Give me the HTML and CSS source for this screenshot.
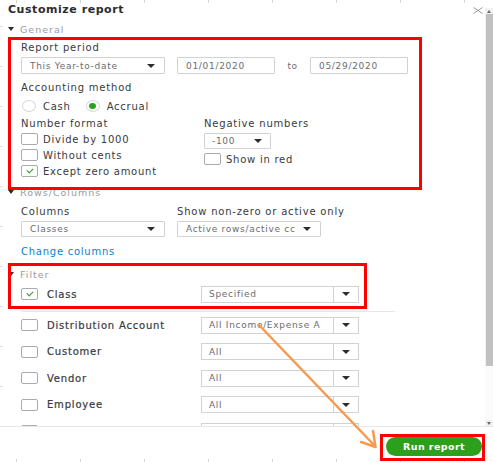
FILE: index.html
```html
<!DOCTYPE html>
<html lang="en">
<head>
<meta charset="utf-8">
<title>Customize report</title>
<link rel="stylesheet" href="styles.css">
</head>
<body>
<div class="page">
  <div class="main">
    <div class="content">
      <div class="titlebar">
        <span class="title">Customize report</span>
        <svg class="close" width="10" height="7" viewBox="0 0 10 7"><path d="M0.5 0.5 L9.5 6.5 M9.5 0.5 L0.5 6.5" stroke="#9a9a9a" stroke-width="1" fill="none"/></svg>
      </div>

      <div class="section-head"><span class="tri"></span>General</div>
      <div class="section general">
        <div class="label first">Report period</div>
        <div class="period-row">
          <div class="select w-period"><span class="val">This Year-to-date</span><span class="caret"></span></div>
          <div class="input w-date">01/01/2020</div>
          <span class="to">to</span>
          <div class="input w-date">05/29/2020</div>
        </div>
        <div class="label gap7">Accounting method</div>
        <div class="radios">
          <span class="radio"></span><span class="opt">Cash</span>
          <span class="radio on"></span><span class="opt">Accrual</span>
        </div>
        <div class="format-grid">
          <div class="col-left">
            <div class="label">Number format</div>
            <div class="check-row"><span class="box"></span><span class="opt">Divide by 1000</span></div>
            <div class="check-row"><span class="box"></span><span class="opt">Without cents</span></div>
            <div class="check-row"><span class="box checked"></span><span class="opt">Except zero amount</span></div>
          </div>
          <div class="col-right">
            <div class="label">Negative numbers</div>
            <div class="select w-neg"><span class="val">-100</span><span class="caret"></span></div>
            <div class="check-row red-row"><span class="box"></span><span class="opt">Show in red</span></div>
          </div>
        </div>
      </div>

      <div class="section-head rows-head"><span class="tri"></span>Rows/Columns</div>
      <div class="section">
        <div class="cols-grid">
          <div class="label">Columns</div>
          <div class="label">Show non-zero or active only</div>
          <div class="select w-cols"><span class="val">Classes</span><span class="caret"></span></div>
          <div class="select w-cols"><span class="val">Active rows/active cc</span><span class="caret"></span></div>
        </div>
        <div class="link">Change columns</div>
      </div>

      <div class="section-head filter-head"><span class="tri"></span>Filter</div>
      <div class="section filter">
        <div class="frow first">
          <span class="box checked"></span><span class="fname">Class</span>
          <div class="split"><span class="val">Specified</span><span class="btn"><span class="caret"></span></span></div>
        </div>
        <div class="sep"></div>
        <div class="frow">
          <span class="box"></span><span class="fname">Distribution Account</span>
          <div class="split"><span class="val">All Income/Expense A</span><span class="btn"><span class="caret"></span></span></div>
        </div>
        <div class="frow">
          <span class="box"></span><span class="fname">Customer</span>
          <div class="split"><span class="val">All</span><span class="btn"><span class="caret"></span></span></div>
        </div>
        <div class="frow">
          <span class="box"></span><span class="fname">Vendor</span>
          <div class="split"><span class="val">All</span><span class="btn"><span class="caret"></span></span></div>
        </div>
        <div class="frow">
          <span class="box"></span><span class="fname">Employee</span>
          <div class="split"><span class="val">All</span><span class="btn"><span class="caret"></span></span></div>
        </div>
        <div class="frow">
          <span class="box"></span><span class="fname"></span>
          <div class="split"><span class="val"></span><span class="btn"><span class="caret"></span></span></div>
        </div>
      </div>
    </div>
    <div class="scrollbar">
      <span class="sb-up"></span>
      <div class="thumb"></div>
      <div class="track"></div>
      <span class="sb-down"></span>
    </div>
  </div>
  <div class="footer">
    <button class="run">Run report</button>
  </div>

  <div class="mark mark-general"></div>
  <div class="mark mark-filter"></div>
  <div class="mark mark-run"></div>
  <svg class="arrow" width="493" height="462" viewBox="0 0 493 462">
    <path d="M259 325 L375 446" stroke="#f79a4f" stroke-width="2.5" fill="none" stroke-linecap="round"/>
    <path d="M373 431 L375.5 447 L361 442" stroke="#f79a4f" stroke-width="2.5" fill="none" stroke-linecap="round" stroke-linejoin="round"/>
  </svg>
</div>
</body>
</html>
```

FILE: styles.css
```css
* { box-sizing: border-box; }
html, body { margin: 0; padding: 0; background: #fff; }
body {
  font-family: "DejaVu Sans", "Liberation Sans", sans-serif;
  color: #393a3d;
  font-size: 10px;
}
.page {
  position: relative;
  width: 493px;
  height: 462px;
  overflow: hidden;
  background:
    repeating-linear-gradient(to right, transparent 0 16px, #d4d4d4 16px 17px, transparent 17px 64px) left top / 100% 3px no-repeat,
    repeating-linear-gradient(to right, transparent 0 16px, #d4d4d4 16px 17px, transparent 17px 64px) left bottom / 100% 3px no-repeat,
    repeating-linear-gradient(to bottom, transparent 0 26px, #e0e0e0 26px 27px, transparent 27px 40px) left top / 3px 100% no-repeat,
    #fff;
}
.main {
  display: flex;
  height: 426px;
  overflow: hidden;
}
.content {
  width: 485px;
  flex: none;
}
.titlebar {
  height: 18px;
  display: flex;
  align-items: center;
  justify-content: space-between;
  padding-left: 8px;
  padding-right: 2px;
}
.title {
  font-weight: bold;
  font-size: 11px;
  letter-spacing: 0.55px;
  color: #2b2c2f;
}
.close { margin-top: 2px; margin-right: 0; }

.section-head {
  height: 14px;
  display: flex;
  align-items: center;
  margin-top: 4px;
  padding-left: 8px;
  color: #9a9ca1;
  font-size: 9.5px;
  letter-spacing: 1px;
}
.tri {
  width: 0; height: 0;
  border-left: 3.5px solid transparent;
  border-right: 3.5px solid transparent;
  border-top: 4.5px solid #2b2c2f;
  margin-right: 6px;
}
.section { padding-left: 21px; }

.label {
  height: 14px;
  line-height: 14px;
  font-size: 10px;
  letter-spacing: 0.8px;
  color: #393a3d;
  white-space: nowrap;
}
.label.first { margin-top: 5px; }
.gap7 { margin-top: 7px; }

.select, .input {
  height: 17px;
  border: 1px solid #cfd2d6;
  border-radius: 1px;
  background: #fff;
  display: flex;
  align-items: center;
  padding-left: 8px;
  color: #6b6c72;
  font-size: 9px;
  letter-spacing: 0.7px;
  white-space: nowrap;
  overflow: hidden;
}
.select { justify-content: space-between; padding-right: 9px; }
.val { overflow: hidden; white-space: nowrap; }
.caret {
  flex: none;
  width: 0; height: 0;
  border-left: 4px solid transparent;
  border-right: 4px solid transparent;
  border-top: 4px solid #2b2c2f;
  margin-left: 6px;
}
.period-row {
  display: flex;
  align-items: center;
  margin-top: 2px;
}
.w-period { width: 144px; margin-right: 12px; }
.w-date { width: 98px; }
.to {
  width: 35px;
  text-align: center;
  color: #6b6c72;
  font-size: 9px;
  letter-spacing: 0.6px;
}
.radios {
  display: flex;
  align-items: center;
  height: 14px;
  margin-top: 4px;
}
.radio {
  width: 14px; height: 12px;
  border: 1px solid #d5d7da;
  border-radius: 50%;
  margin-left: 1px;
  margin-right: 7px;
  display: flex;
  align-items: center;
  justify-content: center;
}
.radio.on::after {
  content: "";
  width: 7px; height: 6px;
  border-radius: 50%;
  background: #2ca01c;
}
.opt {
  font-size: 10px;
  letter-spacing: 0.75px;
  color: #393a3d;
  margin-right: 14px;
  white-space: nowrap;
}
.format-grid {
  display: flex;
  margin-top: 4px;
}
.col-left { width: 183px; }
.check-row {
  height: 16px;
  display: flex;
  align-items: center;
}
.box {
  flex: none;
  width: 17px; height: 12px;
  border: 1px solid #a8abb0;
  border-radius: 2px;
  background: #fff;
  margin-right: 5px;
  position: relative;
}
.box.checked::after {
  content: "";
  position: absolute;
  left: 5px; top: 2px;
  width: 5px; height: 3px;
  border-left: 1.2px solid #2ca01c;
  border-bottom: 1.2px solid #2ca01c;
  transform: rotate(-45deg);
}
.w-neg { width: 67px; height: 16px; margin-top: 2px; padding-left: 7px; padding-right: 8px; }
.red-row { margin-top: 2px; }

.rows-head { margin-top: 6px; }
.cols-grid {
  display: grid;
  grid-template-columns: 156px 144px;
  column-gap: 0;
  margin-top: 6px;
  row-gap: 2px;
}
.w-cols { width: 144px; height: 16px; }
.cols-grid .select:first-of-type { width: 143px; }
.link {
  margin-top: 8px;
  height: 14px;
  line-height: 14px;
  color: #0d7fcc;
  font-size: 10px;
  letter-spacing: 0.75px;
}
.filter-head { margin-top: 8px; }
.filter { width: 395px; }
.frow {
  height: 26.5px;
  display: flex;
  align-items: center;
}
.frow.first { height: 26px; }
.frow .box { margin-right: 9px; }
.fname {
  width: 154px;
  font-size: 10px;
  letter-spacing: 0.8px;
  color: #393a3d;
  white-space: nowrap;
  -webkit-text-stroke: 0.2px #393a3d;
}
.split {
  width: 158px;
  height: 17px;
  border: 1px solid #cfd2d6;
  display: flex;
  align-items: stretch;
  background: #fff;
  color: #6b6c72;
  font-size: 9px;
  letter-spacing: 0.7px;
}
.split .val {
  flex: 1;
  padding-left: 7px;
  display: flex;
  align-items: center;
}
.split .btn {
  width: 25px;
  border-left: 1px solid #cfd2d6;
  display: flex;
  align-items: center;
  justify-content: center;
}
.split .caret { margin-left: 0; }
.sep {
  height: 1px;
  background: #e6e7e9;
  margin-top: 4px;
  margin-left: 0;
}

.scrollbar {
  width: 8px;
  flex: none;
  margin-top: 8px;
  display: flex;
  flex-direction: column;
  background: #f1f1f1;
}
.sb-up, .sb-down {
  flex: none;
  height: 6px;
  display: flex;
  justify-content: center;
  align-items: center;
}
.sb-up::after {
  content: "";
  border-left: 2.5px solid transparent;
  border-right: 2.5px solid transparent;
  border-bottom: 3px solid #6b6b6b;
}
.sb-down::after {
  content: "";
  border-left: 2.5px solid transparent;
  border-right: 2.5px solid transparent;
  border-top: 3px solid #6b6b6b;
}
.thumb {
  height: 352px;
  flex: none;
  background: #c1c1c1;
  margin: 0 0.5px;
}
.track { flex: 1; background: #fbfbfb; }

.footer {
  height: 36px;
  border-top: 1px solid #e8e8e8;
  display: flex;
  justify-content: flex-end;
  align-items: flex-start;
  padding-top: 10px;
  padding-right: 11px;
}
.run {
  width: 96px;
  height: 19px;
  border: none;
  border-radius: 10px;
  background: #2ca01c;
  color: #fff;
  font-family: "DejaVu Sans", "Liberation Sans", sans-serif;
  font-weight: bold;
  font-size: 9.5px;
  letter-spacing: 0.4px;
  padding: 0;
}

.mark {
  position: absolute;
  border: 3px solid #ff0000;
  pointer-events: none;
}
.mark-general { left: 8px; top: 37px; width: 414px; height: 153px; }
.mark-filter { left: 8px; top: 263px; width: 359px; height: 46px; }
.mark-run { left: 380px; top: 434px; width: 105px; height: 27px; }
.arrow { position: absolute; left: 0; top: 0; pointer-events: none; }
```
